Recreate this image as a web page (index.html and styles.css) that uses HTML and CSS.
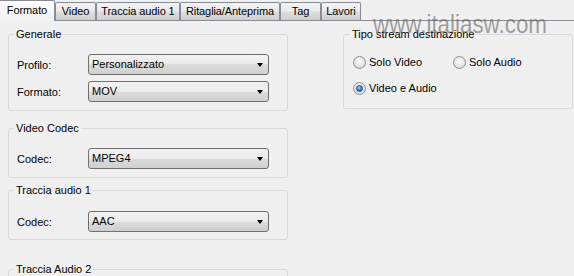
FILE: index.html
```html
<!DOCTYPE html>
<html lang="it">
  <head>
    <meta charset="UTF-8" />
    <meta name="viewport" content="width=device-width, initial-scale=1.0" />
    <title>Formato</title>
    <link rel="stylesheet" href="styles.css">
  </head>
  <body>
    <div class="window">
      <div class="tabs">
        <div class="tab active tab-formato">Formato</div>
        <div class="tab tab-video">Video</div>
        <div class="tab tab-audio">Traccia audio 1</div>
        <div class="tab tab-ritaglia">Ritaglia/Anteprima</div>
        <div class="tab tab-tag">Tag</div>
        <div class="tab tab-lavori">Lavori</div>
      </div>

      <div class="panel">
        <div class="col-left">
          <fieldset class="group general">
            <legend>Generale</legend>
            <div class="row">
              <span class="label">Profilo:</span>
              <div class="combo">Personalizzato</div>
            </div>
            <div class="row">
              <span class="label">Formato:</span>
              <div class="combo">MOV</div>
            </div>
          </fieldset>

          <fieldset class="group video-codec">
            <legend>Video Codec</legend>
            <div class="row">
              <span class="label">Codec:</span>
              <div class="combo">MPEG4</div>
            </div>
          </fieldset>

          <fieldset class="group audio1">
            <legend>Traccia audio 1</legend>
            <div class="row">
              <span class="label">Codec:</span>
              <div class="combo">AAC</div>
            </div>
          </fieldset>

          <fieldset class="group audio2">
            <legend>Traccia Audio 2</legend>
          </fieldset>
        </div>

        <div class="col-right">
          <fieldset class="group stream">
            <legend>Tipo stream destinazione</legend>
            <div class="radios">
              <label class="opt"><span class="radio"></span>Solo Video</label>
              <label class="opt"><span class="radio"></span>Solo Audio</label>
              <label class="opt"><span class="radio checked"></span>Video e Audio</label>
            </div>
          </fieldset>
        </div>
      </div>

      <div class="watermark">www.italiasw.com</div>
    </div>
  </body>
</html>
```

FILE: styles.css
```css
body {
  margin: 0;
  background-color: #f0f0f0;
  font-family: "Liberation Sans", Arial, sans-serif;
  font-size: 11px;
  color: #000;
}
.window {
  position: relative;
  width: 574px;
  height: 276px;
  overflow: hidden;
}

/* tab strip */
.tabs {
  display: flex;
  align-items: flex-start;
  height: 20px;
  position: relative;
  z-index: 2;
}
.tab {
  box-sizing: border-box;
  margin-top: 2px;
  height: 18px;
  line-height: 17px;
  text-align: center;
  white-space: nowrap;
  letter-spacing: -0.1px;
  border: 1px solid #898c95;
  border-bottom: none;
  border-radius: 2px 2px 0 0;
  background: linear-gradient(#f3f3f3, #ebebeb 45%, #dddddd 55%, #cfcfcf);
}
.tab.active {
  margin-top: 0;
  margin-left: -1px;
  height: 21px;
  line-height: 19px;
  background: linear-gradient(#ffffff, #f6f6f6 60%, #f1f1f1);
}
.tab-formato { width: 56px; }
.tab-video { width: 41px; }
.tab-audio { width: 84px; }
.tab-ritaglia { width: 100px; }
.tab-tag { width: 41px; }
.tab-lavori { width: 40px; }

.panel {
  display: flex;
  border-top: 1px solid #898c95;
  padding: 6px 0 0 8px;
  height: 249px;
}
.col-left {
  width: 280px;
}
.col-right {
  width: 230px;
  margin-left: 55px;
}

/* group boxes */
.group {
  margin: 0;
  padding: 13px 18px 8px 8px;
  border: 1px solid #d5dbe0;
  border-radius: 3px;
  min-width: 0;
}
.group legend {
  margin-left: -3px;
  padding: 0 2px;
  line-height: 14px;
}
.video-codec {
  margin-top: 10px;
}
.audio1 {
  margin-top: 5px;
  padding-top: 14px;
  padding-bottom: 7px;
}
.audio2 {
  margin-top: 22px;
  height: 30px;
}

.row {
  display: flex;
  align-items: center;
  height: 21px;
}
.row + .row {
  margin-top: 6px;
}
.label {
  width: 71px;
}
.combo {
  position: relative;
  flex: 1;
  height: 19px;
  line-height: 19px;
  padding-left: 3px;
  border: 1px solid #707070;
  border-radius: 3px;
  background: linear-gradient(#f2f2f2, #ebebeb 50%, #dddddd 50%, #cfcfcf);
}
.combo::after {
  content: "";
  position: absolute;
  right: 5px;
  top: 8px;
  border-left: 3.5px solid transparent;
  border-right: 3.5px solid transparent;
  border-top: 4px solid #000;
}

/* radio group */
.stream {
  padding: 13px 8px 12px 9px;
}
.radios {
  display: grid;
  grid-template-columns: 100px auto;
  row-gap: 10px;
}
.opt {
  display: flex;
  align-items: center;
  height: 16px;
}
.radio {
  position: relative;
  box-sizing: border-box;
  width: 13px;
  height: 13px;
  margin-right: 3px;
  border: 1px solid #8e8f8f;
  border-radius: 50%;
  background: radial-gradient(circle at 50% 40%, #ffffff, #e4e4e4 55%, #cdcdcd);
}
.radio.checked::after {
  content: "";
  position: absolute;
  left: 2px;
  top: 2px;
  box-sizing: border-box;
  width: 7px;
  height: 7px;
  border-radius: 50%;
  border: 1px solid #1c4d86;
  background: radial-gradient(circle at 40% 35%, #9ad6ff, #2a75c4 60%, #1b4f8f);
}

.watermark {
  position: absolute;
  left: 373px;
  top: 11px;
  z-index: 5;
  font-size: 26px;
  line-height: 26px;
  color: rgba(100, 100, 100, 0.6);
  transform: scaleX(0.86);
  transform-origin: 0 0;
  white-space: nowrap;
}
```
